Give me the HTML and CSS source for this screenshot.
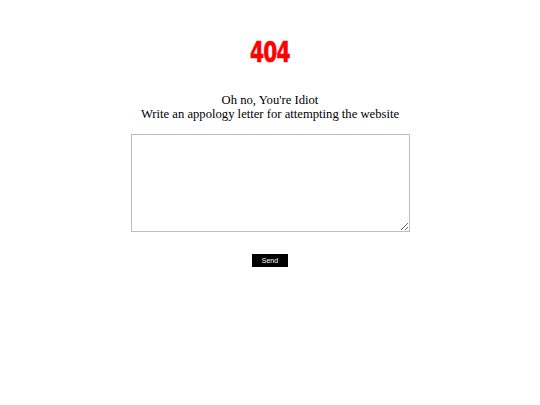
FILE: index.html
```html
<!DOCTYPE html>
<html>
<head>
<meta charset="utf-8">
<link rel="stylesheet" href="styles.css">
</head>
<body>
<main class="page">
  <h1 class="code">404</h1>
  <p class="msg">Oh no, You're Idiot<br>Write an appology letter for attempting the website</p>
  <textarea class="letter"></textarea>
  <button class="send">Send</button>
</main>
</body>
</html>
```
FILE: styles.css
```css
html, body { margin: 0; padding: 0; background: #fff; }
.page {
  display: flex;
  flex-direction: column;
  align-items: center;
  font-family: "Liberation Serif", "Times New Roman", serif;
}
.code {
  margin: 37px 0 0 0;
  font-family: "DejaVu Sans Condensed", "DejaVu Sans", sans-serif;
  font-weight: bold;
  font-stretch: condensed;
  font-size: 28px;
  line-height: 32px;
  color: #ff0000;
  -webkit-text-stroke: 0.6px #ff0000;
  transform: scaleX(0.8);
  letter-spacing: -1px;
}
.msg {
  margin: 24px 0 0 0;
  font-size: 12.65px;
  line-height: 14px;
  text-align: center;
  color: #000;
}
.letter {
  margin-top: 13px;
  width: 279px;
  height: 98px;
  box-sizing: border-box;
  border: 1px solid #bdbdbd;
  resize: vertical;
}
.send {
  margin-top: 22px;
  width: 36px;
  height: 13px;
  padding: 0;
  border: none;
  background: #000;
  color: #fff;
  font-family: "Liberation Sans", Arial, sans-serif;
  font-size: 7px;
  line-height: 13px;
}
```
